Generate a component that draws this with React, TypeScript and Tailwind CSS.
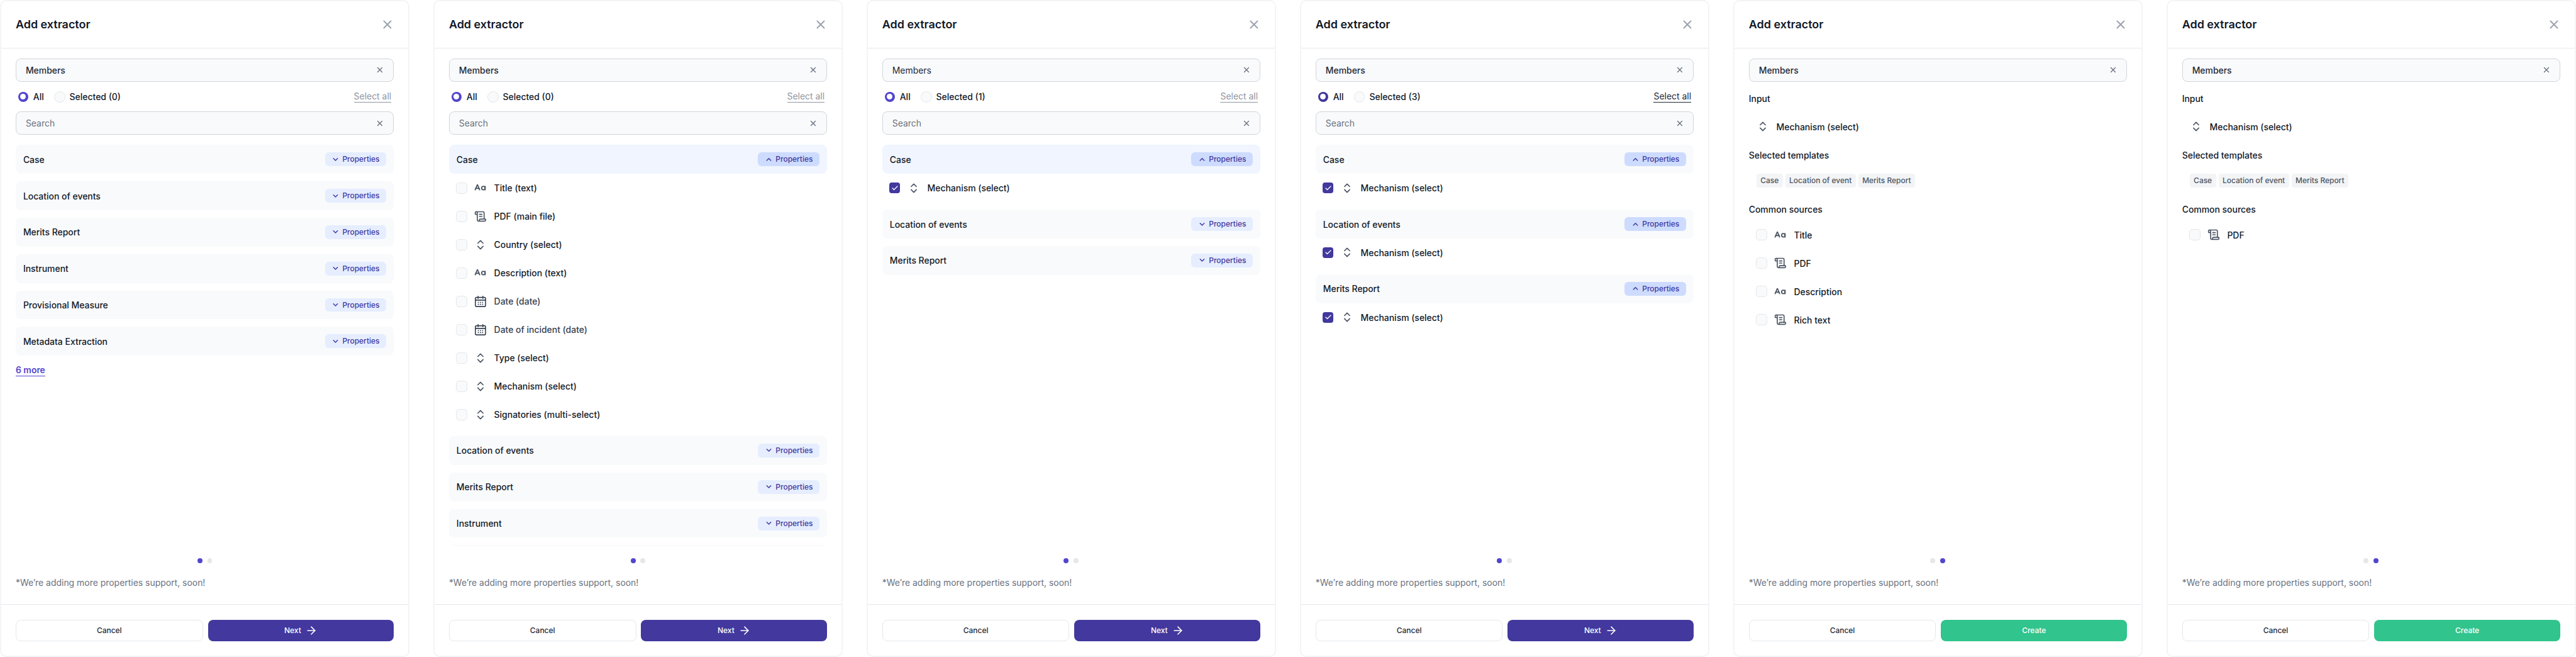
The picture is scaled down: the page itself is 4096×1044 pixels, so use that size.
import React from "react";
import {
  ArrowRight,
  CaseSensitive,
  Check,
  ChevronDown,
  ChevronsUpDown,
  ChevronUp,
  ScrollText,
  X,
} from "lucide-react";

type Kind = "text" | "file" | "select" | "date";

interface Property {
  label: string;
  kind: Kind;
  checked?: boolean;
}

interface Template {
  name: string;
  open?: boolean;
  highlighted?: boolean;
  properties?: Property[];
}

const mechanism: Property = { label: "Mechanism (select)", kind: "select", checked: true };

const caseProperties: Property[] = [
  { label: "Title (text)", kind: "text" },
  { label: "PDF (main file)", kind: "file" },
  { label: "Country (select)", kind: "select" },
  { label: "Description (text)", kind: "text" },
  { label: "Date (date)", kind: "date" },
  { label: "Date of incident (date)", kind: "date" },
  { label: "Type (select)", kind: "select" },
  { label: "Mechanism (select)", kind: "select" },
  { label: "Signatories (multi-select)", kind: "select" },
];

function CalendarIcon() {
  return (
    <svg width="18" height="18" viewBox="0 0 18 18" fill="none" stroke="currentColor" strokeWidth="1.6" strokeLinecap="round" className="text-[#374151]">
      <rect x="0.9" y="2.6" width="16.2" height="14.6" rx="1.8" />
      <path d="M1 6.9h16M5.2 0.8v3.4M12.8 0.8v3.4" />
      <path d="M5.6 10.4h.01M9 10.4h.01M12.4 10.4h.01M5.6 13.6h.01M9 13.6h.01M12.4 13.6h.01" strokeWidth="1.9" />
    </svg>
  );
}

function KindIcon({ kind }: { kind: Kind }) {
  return (
    <span className="flex w-[18px] shrink-0 items-center justify-center text-[#4b5563]">
      {kind === "text" && <CaseSensitive size={19} strokeWidth={2.3} className="shrink-0" />}
      {kind === "file" && <ScrollText size={20} strokeWidth={2} className="shrink-0" />}
      {kind === "select" && <ChevronsUpDown size={20} strokeWidth={2} className="shrink-0" />}
      {kind === "date" && <CalendarIcon />}
    </span>
  );
}

function Checkbox({ checked }: { checked?: boolean }) {
  return checked ? (
    <span className="mx-[0.5px] flex size-[17px] shrink-0 items-center justify-center rounded-[4px] bg-[#42389d] text-white">
      <Check size={12} strokeWidth={2.6} />
    </span>
  ) : (
    <span className="size-[18px] shrink-0 rounded-[5px] border border-[#e5e7eb] bg-[#f9fafb]" />
  );
}

function PropertyItem({ property }: { property: Property }) {
  return (
    <div className="flex h-[45.125px] items-center pl-[11px]">
      <Checkbox checked={property.checked} />
      <span className="ml-3 flex">
        <KindIcon kind={property.kind} />
      </span>
      <span
        className={
          property.kind === "date"
            ? "ml-[13px] pt-px text-sm font-medium text-[#374151]"
            : "ml-[13px] pt-px text-sm font-medium text-[#111928]"
        }
      >
        {property.label}
      </span>
    </div>
  );
}

function TemplateRow({ template }: { template: Template }) {
  return (
    <div>
      <div
        className={
          template.highlighted
            ? "flex h-[46px] items-center justify-between rounded-lg bg-[#f0f5ff] px-3"
            : "flex h-[46px] items-center justify-between rounded-lg bg-[#f9fafb] px-3"
        }
      >
        <span className="pt-px text-sm font-medium text-[#111928]">{template.name}</span>
        <button
          className={
            template.open
              ? "flex h-[22px] w-[98px] items-center gap-1 rounded-md bg-[#cddbfe] pl-[11px] text-xs font-medium text-[#42389d]"
              : "flex h-[22px] w-[98px] items-center gap-1 rounded-md bg-[#e5edff] pl-[11px] text-xs font-medium text-[#42389d]"
          }
        >
          {template.open ? <ChevronUp size={13} strokeWidth={2.6} /> : <ChevronDown size={13} strokeWidth={2.6} />}
          Properties
        </button>
      </div>
      {template.properties?.map((p) => <PropertyItem key={p.label} property={p} />)}
    </div>
  );
}

function Field({ text, tone }: { text: string; tone: "value" | "light" | "placeholder" }) {
  const styles = {
    value: "pt-px text-sm font-medium text-[#1f2a37]",
    light: "pt-px text-sm text-[#1f2a37]",
    placeholder: "pt-px text-sm text-[#6b7280]",
  };
  return (
    <div className="flex h-[37px] shrink-0 items-center justify-between rounded-lg border border-[#d1d5db] bg-[#f9fafb] pr-[14px] pl-[15px]">
      <span className={styles[tone]}>{text}</span>
      <X size={14} strokeWidth={2.4} className="text-[#6b7280]" />
    </div>
  );
}

function Dialog({ step, children }: { step: 1 | 2; children: React.ReactNode }) {
  return (
    <section className="flex h-[1047px] w-[653px] shrink-0 flex-col rounded-[10px] border-[2.02px] border-[#f3f4f6] bg-white">
      <header className="flex h-[75px] shrink-0 items-center justify-between border-b border-[#e5e7eb] pr-[22px] pl-[23px]">
        <h2 className="text-lg font-semibold text-[#111928]">Add extractor</h2>
        <X size={22} strokeWidth={2.2} className="text-[#9ca3af]" />
      </header>
      <main className="flex min-h-0 flex-1 flex-col px-[23px] pt-4">
        {children}
        <div className="mt-auto flex justify-center gap-2">
          <i className={step === 1 ? "size-2 rounded-full bg-[#5145cd]" : "size-2 rounded-full bg-[#e5e7eb]"} />
          <i className={step === 2 ? "size-2 rounded-full bg-[#5145cd]" : "size-2 rounded-full bg-[#e5e7eb]"} />
        </div>
        <p className="mt-[21px] mb-6 text-sm text-[#6b7280]">*We’re adding more properties support, soon!</p>
      </main>
      <footer className="flex h-[82px] shrink-0 gap-2 border-t border-[#e5e7eb] px-[23px] pt-6">
        <button className="h-[34px] flex-1 rounded-lg border border-[#e5e7eb] text-xs font-medium text-[#1f2a37]">
          Cancel
        </button>
        {step === 1 ? (
          <button className="flex h-[34px] flex-1 items-center justify-center gap-[6px] rounded-lg bg-[#42389d] text-xs font-medium text-white">
            Next
            <ArrowRight size={20} strokeWidth={2} />
          </button>
        ) : (
          <button className="h-[34px] flex-1 rounded-lg bg-[#31c48d] text-xs font-medium text-white">Create</button>
        )}
      </footer>
    </section>
  );
}

function TemplateStep({
  selected,
  templates,
  active,
  lightName,
  more,
  divider,
}: {
  selected: number;
  templates: Template[];
  active?: boolean;
  lightName?: boolean;
  more?: string;
  divider?: boolean;
}) {
  return (
    <Dialog step={1}>
      <Field text="Members" tone={lightName ? "light" : "value"} />
      <div className="flex h-12 shrink-0 items-center px-1 text-sm font-medium text-[#111928]">
        <span
          className={
            active
              ? "flex size-4 items-center justify-center rounded-full bg-[#42389d]"
              : "flex size-4 items-center justify-center rounded-full bg-[#5145cd]"
          }
        >
          <i className="size-[9px] rounded-full bg-white" />
        </span>
        <span className="ml-2">All</span>
        <span className="ml-4 size-[18px] rounded-full border border-[#e5e7eb] bg-[#f9fafb]" />
        <span className="ml-[7px]">Selected ({selected})</span>
        <span
          className={
            active
              ? "ml-auto border-b border-[#1f2a37] text-sm leading-[18px] font-normal text-[#1f2a37]"
              : "ml-auto border-b border-[#9095a0] text-sm leading-[18px] font-normal text-[#9095a0]"
          }
        >
          Select all
        </span>
      </div>
      <Field text="Search" tone="placeholder" />
      <div className="mt-4 flex flex-col gap-3">
        {templates.map((t) => (
          <TemplateRow key={t.name} template={t} />
        ))}
      </div>
      {more && (
        <a className="mt-[14px] self-start border-b border-[#5145cd] text-sm leading-[18px] font-semibold text-[#5145cd]">
          {more}
        </a>
      )}
      {divider && <div className="mx-1 mt-3 h-px bg-[#f7f7f9]" />}
    </Dialog>
  );
}

function SourceStep({ sources }: { sources: Property[] }) {
  return (
    <Dialog step={2}>
      <Field text="Members" tone="value" />
      <h3 className="mt-[17px] text-sm font-medium text-[#111928]">Input</h3>
      <div className="mt-[15px] flex h-[40px] items-center pl-[13px]">
        <KindIcon kind="select" />
        <span className="ml-[13px] pt-px text-sm font-medium text-[#111928]">Mechanism (select)</span>
      </div>
      <h3 className="mt-4 text-sm font-medium text-[#111928]">Selected templates</h3>
      <div className="mt-[19px] flex gap-1 pl-3">
        {["Case", "Location of event", "Merits Report"].map((t) => (
          <span key={t} className="flex h-[22px] items-center rounded-[4px] bg-[#f3f4f6] px-[6.5px] text-xs font-medium text-[#4b5563]">
            {t}
          </span>
        ))}
      </div>
      <h3 className="mt-[25px] text-sm font-medium text-[#111928]">Common sources</h3>
      <div className="mt-2 flex flex-col">
        {sources.map((s) => (
          <PropertyItem key={s.label} property={s} />
        ))}
      </div>
    </Dialog>
  );
}

export default function App() {
  return (
    <div className="h-[1044px] w-[4096px] overflow-hidden bg-white">
      <div className="flex h-[1047px] w-[4108px] gap-[38px] font-['Inter',sans-serif] [zoom:0.99708]">
        <TemplateStep
          selected={0}
          more="6 more"
          templates={[
            { name: "Case" },
            { name: "Location of events" },
            { name: "Merits Report" },
            { name: "Instrument" },
            { name: "Provisional Measure" },
            { name: "Metadata Extraction" },
          ]}
        />
        <TemplateStep
          selected={0}
          divider
          templates={[
            { name: "Case", open: true, highlighted: true, properties: caseProperties },
            { name: "Location of events" },
            { name: "Merits Report" },
            { name: "Instrument" },
          ]}
        />
        <TemplateStep
          selected={1}
          lightName
          templates={[
            { name: "Case", open: true, highlighted: true, properties: [mechanism] },
            { name: "Location of events" },
            { name: "Merits Report" },
          ]}
        />
        <TemplateStep
          selected={3}
          active
          templates={[
            { name: "Case", open: true, properties: [mechanism] },
            { name: "Location of events", open: true, properties: [mechanism] },
            { name: "Merits Report", open: true, properties: [mechanism] },
          ]}
        />
        <SourceStep
          sources={[
            { label: "Title", kind: "text" },
            { label: "PDF", kind: "file" },
            { label: "Description", kind: "text" },
            { label: "Rich text", kind: "file" },
          ]}
        />
        <SourceStep sources={[{ label: "PDF", kind: "file" }]} />
      </div>
    </div>
  );
}
